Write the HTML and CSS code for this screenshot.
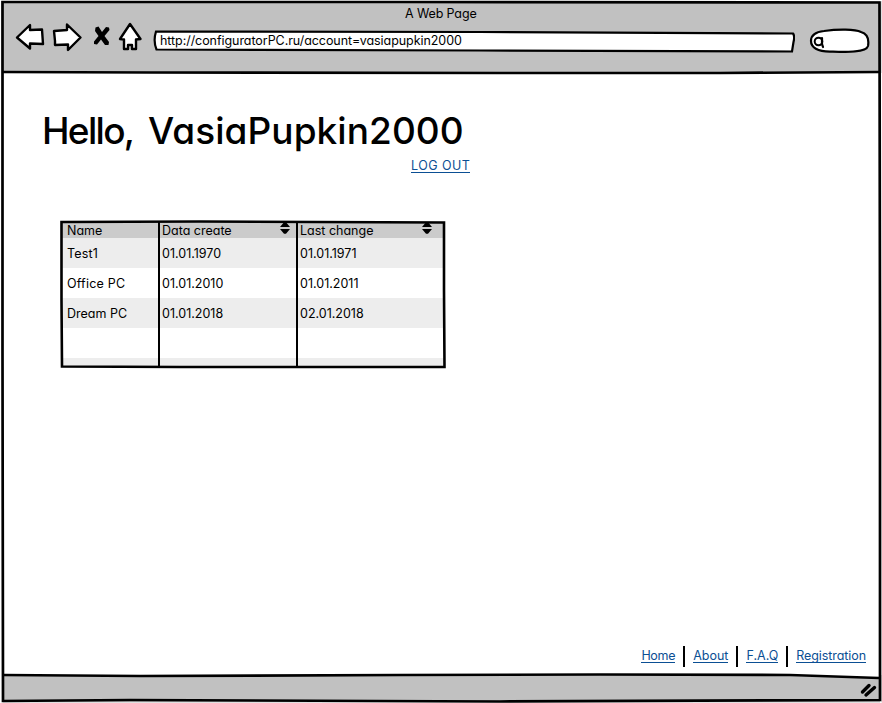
FILE: index.html
```html
<!DOCTYPE html>
<html lang="en">
<head>
<meta charset="utf-8">
<title>A Web Page</title>
<link rel="stylesheet" href="styles.css">
</head>
<body>
<div class="window">
  <header class="chrome">
    <div class="title"><span>A Web Page</span></div>
    <div class="toolbar">
      <svg class="nav" width="154" height="40" viewBox="0 20 154 40">
        <g fill="#fff" stroke="#000" stroke-width="2.4" stroke-linejoin="round">
          <path d="M17 37.500L30 25V30L42 29.500L43 44L30 43.500V48.500Z"/>
          <path d="M54 31L67 30V24.500L80.500 37.500L68 50V44.500L55 45L55 41Z"/>
          <path d="M130 24L120 39L124 39.500V49H128V45H132V49H136L136 39.500L140.500 39Z"/>
        </g>
        <path d="M95.500 27.500L98.500 26.500L102 32L106 27L109 27.500L109.500 30L104.500 36L109 42L108.500 45L105 45L101 39.500L97 44.500L94 44L94 41.500L98.500 36L95 31Z"/>
      </svg>
      <div class="address">
        <svg class="sketch" width="642" height="24" viewBox="153 29 642 24"><path d="M156 31.500L480 32L793 33.500Q795 36 793.500 42L792 51.500L480 50.500L156.500 49.500Q153 41 156 31.500Z" fill="#fff" stroke="#000" stroke-width="2.200"/></svg>
        <span>http://configuratorPC.ru/account=vasiapupkin2000</span>
      </div>
      <svg class="search" width="62" height="28" viewBox="808 27 62 28">
        <path d="M824 31C838 29 855 29 861 32C868 34 869 40 868 46C866 53 845 52 832 51.500C817 52 811 47 811 41C811 36 815 32 824 31Z" fill="#fff" stroke="#000" stroke-width="2.200"/>
        <circle cx="818.500" cy="41.500" r="3.800" fill="none" stroke="#000" stroke-width="2"/>
        <path d="M822 38V44L823 47" fill="none" stroke="#000" stroke-width="2.200" stroke-linecap="round"/>
      </svg>
    </div>
  </header>

  <main class="content">
    <h1><span class="hello">Hello,</span> <span class="user">VasiaPupkin2000</span></h1>
    <div class="logout"><a href="#">LOG OUT</a></div>

    <section class="grid">
      <div class="row head">
        <div><span>Name</span></div>
        <div><span>Data create</span><svg class="sort" width="10" height="12" viewBox="0 0 10 12"><path d="M0 5L4 .300H6L10 5ZM0 7L4 11.700H6L10 7Z"/></svg></div>
        <div><span>Last change</span><svg class="sort" width="10" height="12" viewBox="0 0 10 12"><path d="M0 5L4 .300H6L10 5ZM0 7L4 11.700H6L10 7Z"/></svg></div>
      </div>
      <div class="row"><div><span class="wide">Test1</span></div><div><span>01.01.1970</span></div><div><span>01.01.1971</span></div></div>
      <div class="row"><div><span class="wide">Office PC</span></div><div><span>01.01.2010</span></div><div><span>01.01.2011</span></div></div>
      <div class="row"><div><span>Dream PC</span></div><div><span>01.01.2018</span></div><div><span>02.01.2018</span></div></div>
      <div class="row"></div>
      <div class="row last"></div>
      <svg class="sketch" width="388" height="152" viewBox="59 218 388 152" fill="none" stroke="#000">
        <path d="M61.500 222L200 221.500L444 222.500L444 290L444.500 367L300 367L180 367L62 366.500L61.500 300Z" stroke-width="2.600"/>
        <path d="M159 222V367M297 222V367" stroke-width="2"/>
      </svg>
    </section>

    <nav class="links">
      <a class="home" href="#">Home</a><i></i>
      <a href="#">About</a><i></i>
      <a href="#">F.A.Q</a><i></i>
      <a class="reg" href="#">Registration</a>
    </nav>
  </main>

  <footer class="status"></footer>
  <svg class="sketch" width="882" height="703" viewBox="0 0 882 703" fill="none" stroke="#000" stroke-width="2.700">
    <path d="M0 0H1.500L3 350V703H0ZM0 0H882V1H0ZM881.500 0V703H880V0ZM0 702.500H882V703H0Z" fill="#fff" stroke="none"/>
    <path d="M790 676L879 678V674H790Z" fill="#fff" stroke="none"/>
    <path d="M2.500 2L400 2L879.500 2.500L880 340L880 700L500 701.500L130 700L3 701L2.500 350Z"/>
    <path d="M3 72L150 72.500L500 73L720 73L879 72M3 675L140 676L400 675L600 674.500L790 675L879 678"/>
    <path d="M862.500 692L869 685.500M866 695L874.500 687.500" stroke-width="3.400" stroke-linecap="round"/>
  </svg>
</div>
</body>
</html>
```
FILE: styles.css
```css
* { box-sizing: border-box; }
body {
  margin: 0;
  background: #fff;
  color: #000;
  font: 12.5px/20px Inter, Lato, sans-serif;
  font-feature-settings: "cv11", "calt" 0;
}
span, a { white-space: nowrap; }
svg { display: block; flex: none; }
.window {
  position: relative;
  display: flex;
  flex-direction: column;
  width: 882px;
  height: 703px;
  overflow: hidden;
}
.sketch { position: absolute; inset: 0; pointer-events: none; }
.chrome { height: 73px; background: #c1c1c1; padding-top: 4px; }
.title { height: 16px; padding-left: 405px; letter-spacing: -0.12px; }
.toolbar { display: flex; height: 40px; }
.address {
  position: relative;
  width: 642px;
  height: 24px;
  margin: 9px 0 0 -1px;
  padding: 2px 0 0 7px;
  letter-spacing: -0.06px;
}
.address span { position: relative; }
.search { margin: 7px 0 0 13px; }
.content {
  flex: 1;
  display: flex;
  flex-direction: column;
}
h1 {
  display: flex;
  gap: 15px;
  margin: 34px 0 0 42px;
  height: 48px;
  font-size: 37px;
  line-height: 48px;
  font-weight: 500;
}
.hello { width: 91px; letter-spacing: -1.7px; }
.user { letter-spacing: 0.06px; }
.logout { height: 20px; margin-top: 1px; padding-left: 411px; letter-spacing: 0.45px; }
a {
  display: inline-block;
  height: 17px;
  color: #0b4f94;
  text-decoration: none;
  border-bottom: 1px solid #0b4f94;
}
.grid { position: relative; width: 388px; margin: 42px 0 0 59px; padding: 4px 2px 0 3px; }
.row { display: flex; height: 30px; align-items: center; background: #fff; }
.row:nth-child(even) { background: #ededed; }
.row > div { display: flex; align-items: center; padding-left: 5px; }
.row span { padding-top: 2px; }
.row > div:nth-child(1) { width: 97px; }
.row > div:nth-child(2) { width: 138px; padding-left: 3px; }
.row > div:nth-child(3) { width: 147px; padding-left: 3px; }
.row.head { height: 16px; background: #cbcbcb; }
.sort { margin: -4px 12px 0 auto; }
.row > div:nth-child(2) .sort { margin-right: 7px; }
.wide { letter-spacing: 0.2px; }
.row.last { height: 9px; }
.links {
  display: flex;
  align-items: flex-start;
  height: 29px;
  margin: auto 16px 0 0;
  justify-content: flex-end;
}
.links i { width: 2px; height: 21px; margin: 0 8px; background: #000; }
.home { letter-spacing: -0.3px; }
.reg { letter-spacing: -0.08px; }
.status { height: 28px; background: #c1c1c1; }
```
